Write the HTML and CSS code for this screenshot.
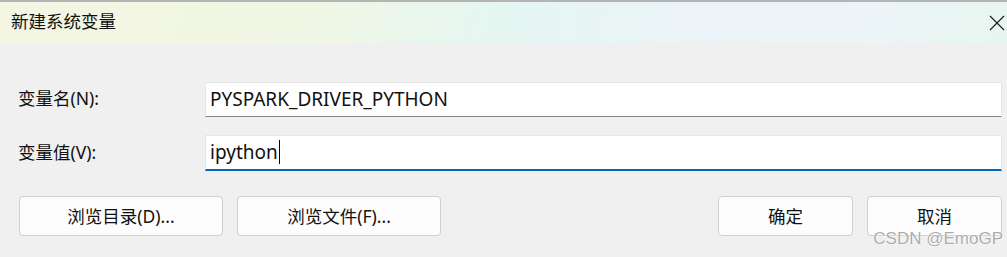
FILE: index.html
```html
<!DOCTYPE html>
<html lang="zh-CN">
  <head>
    <title>新建系统变量</title>
    <meta charset="UTF-8">
    <link rel="stylesheet" href="styles.css">
  </head>
  <body>
    <div class="dialog">
      <div class="behind"></div>
      <div class="titlebar">
        <span class="title">新建系统变量</span>
        <span class="close" aria-label="关闭">
          <svg width="16" height="16" viewBox="0 0 16 16">
            <path d="M1 1 L15 15 M15 1 L1 15" stroke="#1a1a1a" stroke-width="1.1" fill="none" />
          </svg>
        </span>
      </div>

      <div class="content">
        <div class="fields">
          <label class="label" for="var-name">变量名(N):</label>
          <div class="field" id="var-name">PYSPARK_DRIVER_PYTHON</div>

          <label class="label" for="var-value">变量值(V):</label>
          <div class="field focused" id="var-value">ipython<span class="caret"></span></div>
        </div>

        <div class="actions">
          <div class="group">
            <button class="btn wide">浏览目录(D)...</button>
            <button class="btn wide">浏览文件(F)...</button>
          </div>
          <div class="group">
            <button class="btn narrow">确定</button>
            <button class="btn narrow">取消</button>
          </div>
        </div>
      </div>

      <span class="watermark">CSDN @EmoGP</span>
    </div>
  </body>
</html>
```

FILE: styles.css
```css
/* general formatting */
html,
body {
  margin: 0;
  padding: 0;
}
body {
  background: #f0f0f0;
  color: #111;
  font-family: "Noto Sans", "Noto Sans CJK SC", sans-serif;
}

.dialog {
  height: 257px;
  overflow: hidden;
  position: relative;
  width: 1007px;
}

/* window behind the dialog */
.behind {
  background: #b4b4b4;
  height: 2px;
}

/* title bar */
.titlebar {
  align-items: center;
  background: linear-gradient(100deg, #f4f6e2 0%, #f0f6e4 30%, #e5f6f2 50%, #ecf3f8 70%, #ebf4f6 88%, #e8f6ef 100%);
  display: flex;
  height: 42px;
  justify-content: space-between;
  padding: 0 2px 0 11px;
}
.title {
  font-size: 17.5px;
  line-height: 1;
  margin-top: -3px;
}
.close {
  display: flex;
  margin-top: -1px;
}

/* content */
.content {
  padding: 38px 5px 0 18px;
}
.fields {
  align-items: center;
  display: grid;
  grid-template-columns: 187px 1fr;
  row-gap: 18px;
}
.label {
  font-size: 17.5px;
  padding-bottom: 4px;
}
.field {
  align-items: center;
  background: #fff;
  border: 1px solid #e6e6e6;
  border-bottom-color: #868686;
  box-sizing: border-box;
  display: flex;
  font-size: 19px;
  height: 35px;
  padding: 0 4px 2px 4px;
}
.field.focused {
  border-bottom: 2px solid #0067c0;
  height: 36px;
}
.caret {
  background: #000;
  display: inline-block;
  height: 24px;
  margin-left: 1px;
  width: 1px;
}

/* buttons */
.actions {
  display: flex;
  justify-content: space-between;
  margin-top: 25px;
  padding-left: 1px;
}
.group {
  display: flex;
  gap: 14px;
}
.btn {
  background: #fdfdfd;
  border: 1px solid #d0d0d0;
  border-radius: 4px;
  color: #111;
  font-family: inherit;
  font-size: 17.5px;
  height: 40px;
  padding: 0 0 2px 0;
}
.btn.wide {
  width: 204px;
}
.btn.narrow {
  width: 135px;
}

/* overlay */
.watermark {
  bottom: 8px;
  color: rgba(150, 150, 150, 0.8);
  font-family: "Liberation Sans", sans-serif;
  font-size: 17px;
  position: absolute;
  right: 4px;
  text-shadow: 0 0 1px #fff, 0 0 2px #fff;
}
```
